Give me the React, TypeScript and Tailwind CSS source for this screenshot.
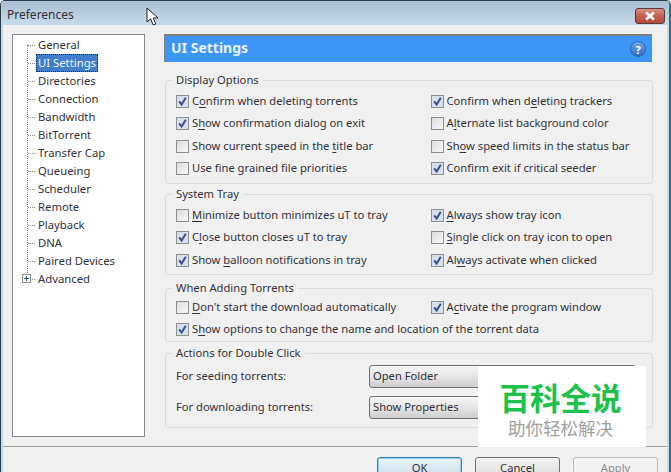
const treeItems = [
  'General',
  'UI Settings',
  'Directories',
  'Connection',
  'Bandwidth',
  'BitTorrent',
  'Transfer Cap',
  'Queueing',
  'Scheduler',
  'Remote',
  'Playback',
  'DNA',
  'Paired Devices',
  'Advanced',
];

function Check({ checked, pre, mn, post }: { checked?: boolean; pre?: string; mn: string; post: string }) {
  return (
    <div className="flex items-center gap-[3px] whitespace-nowrap">
      <span className="flex h-[13px] w-[13px] shrink-0 items-center justify-center border border-[#8e8f8f] bg-gradient-to-br from-[#dcdcdc] to-[#f8f8f8]">
        {checked && (
          <svg width="11" height="11" viewBox="0 0 11 11" className="bg-[#d6e0ee]">
            <path d="M2.2 5.4 L4.6 8.6 L8.8 1.8" fill="none" stroke="#3a4f92" strokeWidth="2" />
          </svg>
        )}
      </span>
      <span>
        {pre}
        <span className="underline underline-offset-2">{mn}</span>
        {post}
      </span>
    </div>
  );
}

function Group({ title, className, children }: { title: string; className: string; children: React.ReactNode }) {
  return (
    <fieldset className={`rounded-[3px] border border-[#dcdcdc] pl-[10px] ${className}`}>
      <legend className="-ml-[4px] h-4 px-1 leading-4">{title}</legend>
      {children}
    </fieldset>
  );
}

function Select({ label }: { label: string }) {
  return (
    <div className="flex h-[23px] w-[267px] items-center rounded-[3px] border border-[#707070] bg-gradient-to-b from-[#f4f4f4] via-[#e6e6e6] to-[#cdcdcd] pl-[3px]">
      {label}
    </div>
  );
}

function Button({ label, tone }: { label: string; tone: 'ok' | 'normal' | 'off' }) {
  const look =
    tone === 'ok'
      ? 'border-[#3c7fb1] from-[#e8f4fa] to-[#c8dce8] shadow-[inset_0_0_0_1px_#8fd0ef]'
      : tone === 'normal'
        ? 'border-[#707070] from-[#f2f2f2] to-[#dcdcdc]'
        : 'border-[#bfbfbf] from-[#f4f4f4] to-[#f0f0f0] text-[#8a8a8a]';
  return (
    <div className={`flex h-[23px] w-[85px] items-center justify-center rounded-[3px] border bg-gradient-to-b ${look}`}>{label}</div>
  );
}

export default function App() {
  return (
    <div className="h-[472px] w-[671px] overflow-hidden rounded-t-[5px] border-l border-r-2 border-t border-l-[#2c3b48] border-r-[#2f6d86] border-t-[#2c3b48]">
      <div
        className="relative h-[471px] border-x-2 border-x-[#c3d8e8] bg-[#f0f0f0] text-[11.2px] text-[#333038]"
        style={{ fontFamily: '"Noto Sans", "Noto Sans CJK SC", sans-serif' }}
      >
        {/* title bar */}
        <div className="-mx-[2px] flex h-6 items-center justify-between bg-gradient-to-b from-[#a9bdd0] to-[#c8dbea] pl-[6px] pr-[4px]">
          <span className="mt-[3px] text-[12px]">Preferences</span>
          <div className="mt-[5px] flex h-[16px] w-[30px] items-center justify-center rounded-[3px] border border-[#5b3a38] bg-gradient-to-b from-[#d98f83] via-[#c25f4e] to-[#b84a38]">
            <svg width="12" height="10" viewBox="0 0 12 10">
              <path d="M2 1.5 L10 8.5 M10 1.5 L2 8.5" stroke="#fff" strokeWidth="2.6" />
            </svg>
          </div>
        </div>

        <div className="ml-[9px] flex pt-[9px]">
          {/* tree */}
          <div className="relative h-[403px] w-[133px] shrink-0 border border-[#828790] bg-white pt-px">
            <div className="absolute left-[14px] top-[10px] h-[234px] border-l border-dotted border-[#888]" />
            {treeItems.map((item) => (
              <div key={item} className="relative flex h-[18px] items-center pl-[25px] text-[11.3px]">
                <span className="absolute left-[15px] top-[9px] w-[7px] border-t border-dotted border-[#888]" />
                {item === 'Advanced' && (
                  <span className="absolute left-[9px] top-[4px] flex h-[9px] w-[9px] items-center justify-center border border-[#919191] bg-white text-[#333]">
                    <svg width="7" height="7" viewBox="0 0 7 7">
                      <path d="M1 3.5 H6 M3.5 1 V6" stroke="#2c4a7c" strokeWidth="1" />
                    </svg>
                  </span>
                )}
                {item === 'UI Settings' ? (
                  <span className="-ml-[2px] flex h-[18px] items-center border border-dotted border-[#1a2a44] bg-[#3f7fcb] px-px text-[#eef6ff]">
                    {item}
                  </span>
                ) : (
                  item
                )}
              </div>
            ))}
          </div>

          {/* settings */}
          <div className="ml-[19px] flex-1">
            <div className="flex h-[28px] w-[488px] items-center justify-between border-l border-t-2 border-[#7d7d7d] bg-[#3c96f8] pl-[6px] pr-[6px]">
              <span className="pb-[3px] text-[14px] font-bold text-[#e6f2ff]">UI Settings</span>
              <span className="flex h-4 w-4 items-center justify-center rounded-full border border-[#2a64b4] bg-gradient-to-b from-[#6fa5e6] to-[#2f6cc0] text-[11px] font-bold leading-none text-white">
                ?
              </span>
            </div>

            <Group title="Display Options" className="ml-px mt-[10px] h-[112px] w-[488px]">
              <div className="grid grid-cols-[254.5px_1fr] auto-rows-[22.5px] items-center pt-[2px]">
                <Check checked pre="C" mn="o" post="nfirm when deleting torrents" />
                <Check checked pre="Confirm when d" mn="e" post="leting trackers" />
                <Check checked pre="S" mn="h" post="ow confirmation dialog on exit" />
                <Check pre="A" mn="l" post="ternate list background color" />
                <Check pre="Show current speed in the " mn="t" post="itle bar" />
                <Check pre="Sh" mn="o" post="w speed limits in the status bar" />
                <Check mn="" post="Use fine grained file priorities" />
                <Check checked mn="" post="Confirm exit if critical seeder" />
              </div>
            </Group>

            <Group title="System Tray" className="ml-px mt-[2px] h-[89px] w-[488px]">
              <div className="grid grid-cols-[254.5px_1fr] auto-rows-[22.5px] items-center pt-[2px]">
                <Check mn="M" post="inimize button minimizes uT to tray" />
                <Check checked mn="A" post="lways show tray icon" />
                <Check checked pre="C" mn="l" post="ose button closes uT to tray" />
                <Check mn="S" post="ingle click on tray icon to open" />
                <Check checked pre="Show " mn="b" post="alloon notifications in tray" />
                <Check checked pre="Al" mn="w" post="ays activate when clicked" />
              </div>
            </Group>

            <Group title="When Adding Torrents" className="ml-px mt-[5px] h-[62px] w-[488px]">
              <div className="grid grid-cols-[254.5px_1fr] auto-rows-[22.5px] items-center">
                <Check mn="D" post="on't start the download automatically" />
                <Check checked pre="A" mn="c" post="tivate the program window" />
                <div className="col-span-2">
                  <Check checked pre="S" mn="h" post="ow options to change the name and location of the torrent data" />
                </div>
              </div>
            </Group>

            <Group title="Actions for Double Click" className="ml-px mt-[3px] h-[83px] w-[488px]">
              <div className="mt-[4px] flex h-[23px] items-center justify-between pr-[16px]">
                <span>For seeding torrents:</span>
                <Select label="Open Folder" />
              </div>
              <div className="mt-2 flex h-[23px] items-center justify-between pr-[16px]">
                <span>For downloading torrents:</span>
                <Select label="Show Properties" />
              </div>
            </Group>
          </div>
        </div>

        {/* footer */}
        <div className="mt-[9px] flex justify-end gap-[13px] border-t border-[#a0a0a0] pr-[9px] pt-[10px]">
          <Button label="OK" tone="ok" />
          <Button label="Cancel" tone="normal" />
          <Button label="Apply" tone="off" />
        </div>

        {/* watermark */}
        <div className="absolute left-[475px] top-[365px] flex h-[81px] w-[168px] flex-col items-center bg-white pr-[3px] pt-[14px]">
          <span className="text-[30.5px] font-bold leading-[36px] text-[#1cc24a]">百科全说</span>
          <span className="mt-[1px] text-[17.5px] leading-[22px] text-[#a0a0a0]">助你轻松解决</span>
        </div>

        {/* mouse pointer */}
        <svg className="absolute left-[143px] top-[6px]" width="14" height="20" viewBox="0 0 14 20">
          <path d="M1 1 V15 L4.6 11.8 L7.2 18 L9.8 17 L7.2 11 H12 Z" fill="#fff" stroke="#222" strokeWidth="1" />
        </svg>
      </div>
    </div>
  );
}
